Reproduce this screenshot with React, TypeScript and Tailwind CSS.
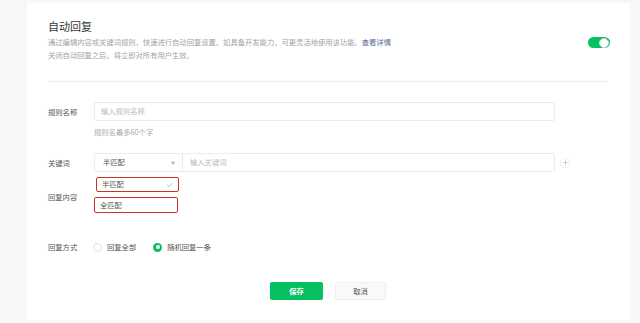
import { Check, Plus } from "lucide-react";

const font = { fontFamily: '"Noto Sans CJK SC", "Noto Sans", sans-serif' };

function Toggle() {
  return (
    <div className="relative h-[11px] w-[22px] rounded-full bg-[#07c160]">
      <div className="absolute right-[1px] top-[0.5px] h-[10px] w-[10px] rounded-full border border-[#d9d9d9] bg-white" />
    </div>
  );
}

function Label({ children }: { children: React.ReactNode }) {
  return <div className="w-[46px] shrink-0 text-[7.3px] leading-[12px] text-[#555]">{children}</div>;
}

export default function App() {
  return (
    <div style={font} className="h-[323px] w-[640px] overflow-hidden bg-[#f6f7f9] pl-[27px] pr-[10px] pt-[3px]">
      <div className="h-[317px] w-[603px] bg-white pl-[21px] pr-[22px] pt-[15px]">
        {/* header */}
        <div className="flex items-start justify-between">
          <div>
            <div className="text-[11px] leading-[16px] text-[#353535]">自动回复</div>
            <div className="mt-[2px] text-[7.3px] leading-[13px] text-[#a3a3a3]">
              <div>
                通过编辑内容或关键词规则，快速进行自动回复设置。如具备开发能力，可更灵活地使用该功能。
                <span className="text-[#576b95]">查看详情</span>
              </div>
              <div>关闭自动回复之后，将立即对所有用户生效。</div>
            </div>
          </div>
          <div className="-mr-[2px] mt-[19px]">
            <Toggle />
          </div>
        </div>

        <div className="mt-[19px] h-px bg-[#eeeeee]" />

        {/* rule name */}
        <div className="mt-[20px] flex items-center">
          <Label>规则名称</Label>
          <div className="flex h-[19px] w-[461px] items-center rounded-[2px] border border-[#ececec] px-[6px] text-[7.3px] text-[#bbbbbb]">
            输入规则名称
          </div>
        </div>
        <div className="ml-[46px] mt-[5px] text-[7.3px] leading-[12px] text-[#a9a9a9]">规则名最多60个字</div>

        {/* keyword */}
        <div className="relative mt-[15px] flex items-center">
          <Label>关键词</Label>
          <div className="flex h-[19px] w-[461px] items-center rounded-[2px] border border-[#ececec]">
            <div className="flex h-full w-[88px] items-center justify-between border-r border-[#ececec] pl-[8px] pr-[7px] text-[7.3px] text-[#555]">
              <span>半匹配</span>
              <span className="text-[4px] text-[#aaaaaa]">▼</span>
            </div>
            <div className="pl-[7px] text-[7.3px] text-[#bbbbbb]">输入关键词</div>
          </div>
          <div className="ml-[5px] flex h-[10px] w-[10px] items-center justify-center rounded-full border border-[#eeeeee] text-[#999]">
            <Plus size={7} strokeWidth={1.5} />
          </div>

          {/* dropdown */}
          <div className="absolute left-[46px] top-[24px] w-[88px] bg-white">
            <div className="ml-[2px] flex h-[15px] w-[83px] items-center justify-between rounded-[2px] border-[1.5px] border-[#c8322a] pl-[5px] pr-[4px] text-[7.3px] text-[#555]">
              <span>半匹配</span>
              <Check size={8} strokeWidth={1.5} className="text-[#07c160]" />
            </div>
            <div className="mt-[5px] flex h-[16px] w-[84px] items-center rounded-[2px] border-[1.5px] border-[#c8322a] pl-[5px] text-[7.3px] text-[#555]">
              全匹配
            </div>
          </div>
        </div>

        {/* reply content */}
        <div className="mt-[19px] flex items-center">
          <Label>回复内容</Label>
        </div>

        {/* reply mode */}
        <div className="mt-[38px] flex items-center">
          <Label>回复方式</Label>
          <div className="ml-[-1px] flex items-center text-[7.3px] text-[#555]">
            <div className="h-[9px] w-[9px] rounded-full border border-[#e0e0e0] bg-white" />
            <span className="ml-[5px]">回复全部</span>
            <div className="ml-[17px] flex h-[9px] w-[9px] items-center justify-center rounded-full bg-[#07c160]">
              <div className="h-[4px] w-[4px] rounded-full bg-white" />
            </div>
            <span className="ml-[5px]">随机回复一条</span>
          </div>
        </div>

        {/* buttons */}
        <div className="mt-[29px] flex justify-center gap-[12px]">
          <div className="flex h-[18px] w-[53px] items-center justify-center rounded-[2px] bg-[#07c160] text-[7.3px] font-bold text-white">
            保存
          </div>
          <div className="flex h-[18px] w-[51px] items-center justify-center rounded-[2px] border border-[#eeeeee] bg-[#f9f9f9] text-[7.3px] text-[#555]">
            取消
          </div>
        </div>
      </div>
    </div>
  );
}
